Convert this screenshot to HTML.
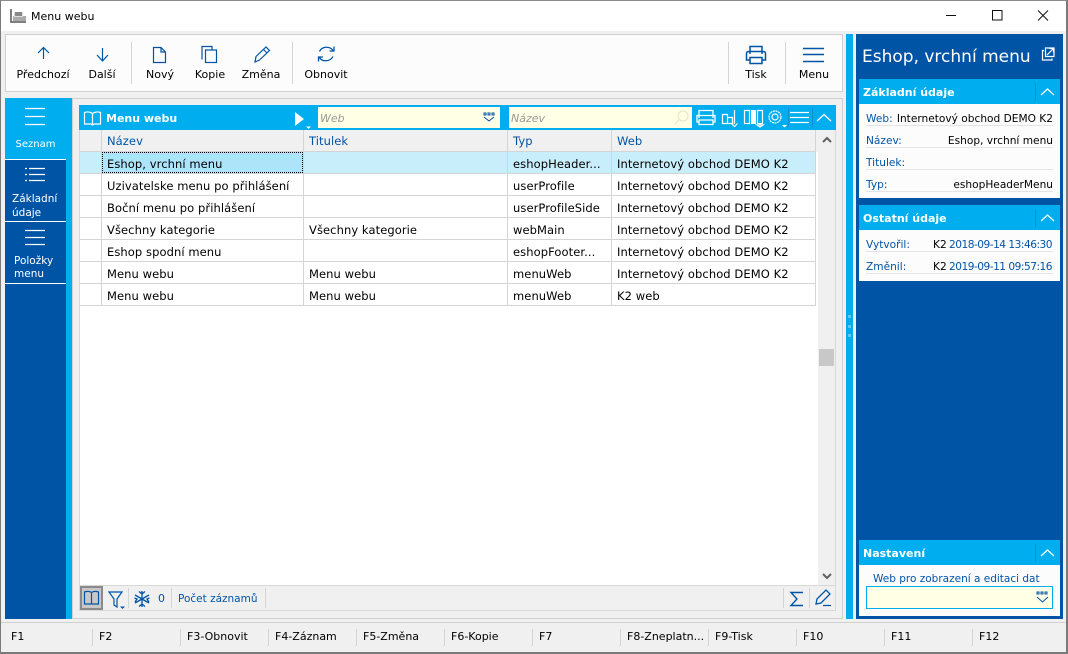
<!DOCTYPE html>
<html><head><meta charset="utf-8"><style>
html,body{margin:0;padding:0}
body{width:1068px;height:654px;position:relative;overflow:hidden;background:#f0f0f0;font:11px/14px "DejaVu Sans","Liberation Sans",sans-serif;color:#000}
div,span,svg{position:absolute;box-sizing:border-box}
.t{white-space:nowrap}
.r{font-size:11.5px;letter-spacing:.08px}
.v{font-size:10.6px}
.b{color:#0054a6}
.c{text-align:center}
.h{background:#00aeef}
.hd{color:#fff;font-weight:bold;font-size:11px;white-space:nowrap}
.l{background:#d4d4d4}
svg{overflow:visible;fill:none}
</style></head><body>
<div style="left:0;top:0;width:1068px;height:654px;border:1px solid #7a7a7a;border-top-color:#8a8a8a;z-index:9;border-right-width:2px;border-bottom-width:2px"></div>
<div style="left:1px;top:1px;width:1066px;height:30px;background:#fff"></div>
<svg style="left:10px;top:8px" width="17" height="15"><path d="M1 1V14H16" stroke="#555" stroke-width="1.5"/><rect x="3" y="8" width="13" height="5" fill="#aaa"/><rect x="4" y="4" width="9" height="5" fill="#ddd"/><path d="M5 5h7M5 7h7" stroke="#333"/></svg>
<div class="t" style="left:31px;top:10px">Menu webu</div>
<svg style="left:946px;top:10px" width="110" height="12"><path d="M0 5.5H10" stroke="#111"/><rect x="46.5" y=".5" width="9.5" height="9.5" stroke="#111"/><path d="M92 .5L102 10.5M102 .5L92 10.5" stroke="#111"/></svg>

<div style="left:5px;top:34px;width:838px;height:58px;background:#fcfcfc;border:1px solid #d0d0d0"></div>
<div class="l" style="left:131px;top:42px;width:1px;height:42px"></div>
<div class="l" style="left:292px;top:42px;width:1px;height:42px"></div>
<div class="l" style="left:728px;top:42px;width:1px;height:42px"></div>
<div class="l" style="left:785px;top:42px;width:1px;height:42px"></div>
<svg style="left:0;top:0" width="860" height="90" stroke="#0054a6" stroke-width="1.2">
<path d="M43.500 59V48M38 53L43.500 47.500 49 53"/>
<path d="M102.500 48V60M97 55L102.500 61 108 55"/>
<path d="M153.500 47.500H161L165.500 52V62.500H153.500ZM161 47.500V52H165.500"/>
<path d="M202 59.500V46.500H212V50" /><rect x="205.500" y="50" width="11" height="12.500"/>
<path d="M255 62L256 56.500 266 47 269.500 50.500 259.500 60ZM263.500 49.500L267 53"/>
<path d="M319.500 51.500C322 46 330 46 333 50.500M334 46.500V51H329.500M333 56.500C330 62 322 62 319.500 57.500M318.500 61.500V57H323" stroke-width="1.300"/>
<path d="M750 54V46.500H762V54M750 60H746.500V53.500Q746.500 51.500 749 51.500H763Q765.500 51.500 765.500 53.500V60H762M750 57.500H762V63.500H750Z" stroke-width="1.500"/>
<path d="M803 48.500H824M803 54.500H824M803 61.500H824" stroke-width="1.500"/>
</svg>
<div class="t c" style="left:3px;top:68px;width:80px">Předchozí</div>
<div class="t c" style="left:72px;top:68px;width:60px">Další</div>
<div class="t c" style="left:130px;top:68px;width:60px">Nový</div>
<div class="t c" style="left:180px;top:68px;width:60px">Kopie</div>
<div class="t c" style="left:231px;top:68px;width:60px">Změna</div>
<div class="t c" style="left:296px;top:68px;width:60px">Obnovit</div>
<div class="t c" style="left:726px;top:68px;width:60px">Tisk</div>
<div class="t c" style="left:784px;top:68px;width:60px">Menu</div>

<div style="left:72px;top:98px;width:771px;height:521px;border:1px solid #d0d0d0;background:#f0f0f0"></div>
<div style="left:5px;top:98px;width:67px;height:521px;background:#00aeef"></div>
<div style="left:5px;top:160px;width:61px;height:459px;background:#0054a6"></div>
<div style="left:5px;top:159px;width:61px;height:1px;background:#fff"></div>
<div style="left:5px;top:221px;width:61px;height:1px;background:#fff"></div>
<div style="left:5px;top:283px;width:61px;height:1px;background:#fff"></div>
<svg style="left:0;top:0" width="70" height="260" stroke="#fff">
<path d="M25 108.500H45M25 116.500H45M25 124.500H45" stroke-width="1.300"/>
<path d="M25 168.500H27M29 168.500H45M25 174.500H27M29 174.500H45M25 180.500H27M29 180.500H45" stroke-width="1.300"/>
<path d="M25 230.500H45M25 237.500H45M25 244.500H45" stroke-width="1.300"/>
</svg>
<div class="t c" style="left:5px;top:138px;width:61px;color:#fff;font-size:10px">Seznam</div>
<div class="t" style="left:12px;top:192px;color:#fff;line-height:14px;font-size:10.500px">Základní<br>údaje</div>
<div class="t" style="left:14px;top:255px;color:#fff;line-height:13px;font-size:10.500px">Položky<br>menu</div>

<div style="left:79px;top:105px;width:757px;height:506px;background:#fff;border:1px solid #d8d8d8;border-top:0"></div>
<div class="h" style="left:79px;top:105px;width:757px;height:25px"></div>
<svg style="left:79px;top:105px" width="757" height="25" stroke="#fff" stroke-width="1.200">
<path d="M5.500 7.500Q10 6 13.500 8.500Q17 6 21.500 7.500V19H15L13.500 20 12 19H5.500ZM13.500 8.500V19"/>
<path d="M216 7V21L225 14Z" fill="#fff" stroke="none"/><path d="M227 21.500H232L229.500 24Z" fill="#fff" stroke="none"/>
<path d="M620 13V5.500H634V13M620 17H618V10.500H636V17H634M620 15H634V19.500H620Z" stroke-width="1.300"/>
<path d="M643.500 9.500h5v9h-5zM648.500 12.500h5v6h-5zM655.500 5v14M652.500 18.500l3 3 3-3" />
<path d="M665.500 5.500h5v13h-5zM678.500 5.500h5v13h-5zM681 19l0 1M678 20h6l-3 2z"/><rect x="672" y="5" width="5" height="14" fill="#fff" stroke="none"/>
<circle cx="696" cy="12" r="6" stroke-dasharray="2 .6"/><circle cx="696" cy="12" r="3"/><path d="M703 20h5l-2.500 2.500z" fill="#fff" stroke="none"/>
<path d="M711 7.500H730M711 12.500H730M711 17.500H730" stroke-width="1.200"/>
<path d="M738 16L745 9.500 752 16" stroke-width="1.200"/>
<path d="M709.500 3V22M733.500 3V22" stroke="#1090d0" stroke-width="1"/>
</svg>
<div class="hd" style="left:106px;top:112px">Menu webu</div>
<div style="left:318px;top:107px;width:182px;height:21px;background:#ffffe6"></div>
<div class="t" style="left:320px;top:112px;color:#999;font-style:italic">Web</div>
<svg style="left:483px;top:112px" width="13" height="10" stroke="#0054a6"><path d="M1 1h2v2h-2zM5 1h2v2h-2zM9 1h2v2h-2zM1 5L6 9 11 5" stroke-width="1"/></svg>
<div style="left:509px;top:107px;width:183px;height:21px;background:#ffffe6"></div>
<div class="t" style="left:511px;top:112px;color:#999;font-style:italic">Název</div>
<svg style="left:674px;top:110px" width="16" height="15" stroke="#e8e8c8" stroke-width="1.200"><circle cx="9" cy="6" r="5"/><path d="M5 10L1 14"/></svg>

<div style="left:80px;top:130px;width:738px;height:22px;background:#f0f0f0"></div>
<div style="left:818px;top:130px;width:17px;height:455px;background:#f0f0f0"></div>
<div style="left:819px;top:349px;width:15px;height:17px;background:#c8c8c8"></div>
<svg style="left:818px;top:130px" width="18" height="455" stroke="#606060" stroke-width="2"><path d="M5 12L9 8 13 12M5 444L9 448 13 444"/></svg>
<div style="left:80px;top:152px;width:736px;height:22px;background:#c9eefb"></div>
<div style="left:102px;top:152px;width:201px;height:21px;background:#ade4fa;border:1px dotted #000"></div>
<div class="l" style="left:80px;top:151px;width:736px;height:1px"></div>
<div class="l" style="left:80px;top:173px;width:736px;height:1px"></div>
<div class="l" style="left:80px;top:195px;width:736px;height:1px"></div>
<div class="l" style="left:80px;top:217px;width:736px;height:1px"></div>
<div class="l" style="left:80px;top:239px;width:736px;height:1px"></div>
<div class="l" style="left:80px;top:261px;width:736px;height:1px"></div>
<div class="l" style="left:80px;top:283px;width:736px;height:1px"></div>
<div class="l" style="left:80px;top:305px;width:736px;height:1px"></div>
<div class="l" style="left:101px;top:130px;width:1px;height:175px"></div>
<div class="l" style="left:303px;top:130px;width:1px;height:175px"></div>
<div class="l" style="left:507px;top:130px;width:1px;height:175px"></div>
<div class="l" style="left:611px;top:130px;width:1px;height:175px"></div>
<div class="l" style="left:815px;top:130px;width:1px;height:175px"></div>
<div class="t b r" style="left:107px;top:134px">Název</div>
<div class="t b r" style="left:309px;top:134px">Titulek</div>
<div class="t b r" style="left:513px;top:134px">Typ</div>
<div class="t b r" style="left:617px;top:134px">Web</div>

<div class="t r" style="left:107px;top:157px">Eshop, vrchní menu</div><div class="t r" style="left:513px;top:157px">eshopHeader...</div><div class="t r" style="left:617px;top:157px">Internetový obchod DEMO K2</div>
<div class="t r" style="left:107px;top:179px">Uzivatelske menu po přihlášení</div><div class="t r" style="left:513px;top:179px">userProfile</div><div class="t r" style="left:617px;top:179px">Internetový obchod DEMO K2</div>
<div class="t r" style="left:107px;top:201px">Boční menu po přihlášení</div><div class="t r" style="left:513px;top:201px">userProfileSide</div><div class="t r" style="left:617px;top:201px">Internetový obchod DEMO K2</div>
<div class="t r" style="left:107px;top:223px">Všechny kategorie</div><div class="t r" style="left:309px;top:223px">Všechny kategorie</div><div class="t r" style="left:513px;top:223px">webMain</div><div class="t r" style="left:617px;top:223px">Internetový obchod DEMO K2</div>
<div class="t r" style="left:107px;top:245px">Eshop spodní menu</div><div class="t r" style="left:513px;top:245px">eshopFooter...</div><div class="t r" style="left:617px;top:245px">Internetový obchod DEMO K2</div>
<div class="t r" style="left:107px;top:267px">Menu webu</div><div class="t r" style="left:309px;top:267px">Menu webu</div><div class="t r" style="left:513px;top:267px">menuWeb</div><div class="t r" style="left:617px;top:267px">Internetový obchod DEMO K2</div>
<div class="t r" style="left:107px;top:289px">Menu webu</div><div class="t r" style="left:309px;top:289px">Menu webu</div><div class="t r" style="left:513px;top:289px">menuWeb</div><div class="t r" style="left:617px;top:289px">K2 web</div>

<div style="left:80px;top:585px;width:755px;height:25px;background:#f0f0f0;border-top:1px solid #d8d8d8"></div>
<div style="left:80px;top:586px;width:23px;height:24px;background:#c8c8c8;border:2px solid #8a8a8a"></div>
<div class="l" style="left:128px;top:588px;width:1px;height:20px"></div>
<div class="l" style="left:171px;top:588px;width:1px;height:20px"></div>
<div class="l" style="left:265px;top:588px;width:1px;height:20px"></div>
<div class="l" style="left:783px;top:588px;width:1px;height:20px"></div>
<div class="l" style="left:809px;top:588px;width:1px;height:20px"></div>
<svg style="left:0;top:0" width="840" height="620" stroke="#0054a6" stroke-width="1.200">
<path d="M84.500 592Q89 590.500 91.500 592.500Q94 590.500 98.500 592V604H84.500ZM91.500 592.500V604"/>
<path d="M109 592H122L117 599V607L114 605V599Z"/><path d="M120 606.500H125L122.500 609Z" fill="#0054a6" stroke="none"/>
<path d="M142 591V607M135 595L149 603M149 595L135 603M139 591.500L142 594 145 591.500M139 606.500L142 604 145 606.500M134.500 598L137 599 135 602M149.500 598L147 599 149 602" stroke-width="1.300"/>
<path d="M803 592.500H791L797 599 791 605.500H803" stroke-width="1.400"/>
<path d="M816 604L817 599 826 590 830 594 821 603ZM823 605.500H831" stroke-width="1.300"/>
</svg>
<div class="t b" style="left:158px;top:592px">0</div>
<div class="t b" style="left:178px;top:592px;font-size:10.500px">Počet záznamů</div>

<div style="left:1px;top:622px;width:1066px;height:1px;background:#d0d0d0"></div>
<div class="l" style="left:92px;top:629px;width:1px;height:17px"></div>
<div class="l" style="left:180px;top:629px;width:1px;height:17px"></div>
<div class="l" style="left:268px;top:629px;width:1px;height:17px"></div>
<div class="l" style="left:356px;top:629px;width:1px;height:17px"></div>
<div class="l" style="left:444px;top:629px;width:1px;height:17px"></div>
<div class="l" style="left:532px;top:629px;width:1px;height:17px"></div>
<div class="l" style="left:620px;top:629px;width:1px;height:17px"></div>
<div class="l" style="left:708px;top:629px;width:1px;height:17px"></div>
<div class="l" style="left:796px;top:629px;width:1px;height:17px"></div>
<div class="l" style="left:884px;top:629px;width:1px;height:17px"></div>
<div class="l" style="left:972px;top:629px;width:1px;height:17px"></div>
<div class="t" style="left:11px;top:630px">F1</div>
<div class="t" style="left:99px;top:630px">F2</div>
<div class="t" style="left:187px;top:630px">F3-Obnovit</div>
<div class="t" style="left:275px;top:630px">F4-Záznam</div>
<div class="t" style="left:363px;top:630px">F5-Změna</div>
<div class="t" style="left:451px;top:630px">F6-Kopie</div>
<div class="t" style="left:539px;top:630px">F7</div>
<div class="t" style="left:627px;top:630px">F8-Zneplatn...</div>
<div class="t" style="left:715px;top:630px">F9-Tisk</div>
<div class="t" style="left:803px;top:630px">F10</div>
<div class="t" style="left:891px;top:630px">F11</div>
<div class="t" style="left:979px;top:630px">F12</div>

<div class="h" style="left:846px;top:34px;width:7px;height:585px"></div>
<div style="left:848px;top:315px;width:3px;height:3px;background:#60c8f5"></div>
<div style="left:848px;top:325px;width:3px;height:3px;background:#60c8f5"></div>
<div style="left:848px;top:334px;width:3px;height:3px;background:#60c8f5"></div>
<div style="left:856px;top:34px;width:207px;height:585px;background:#0054a6"></div>
<div class="t" style="left:862px;top:46px;color:#fff;font-size:17px;line-height:22px">Eshop, vrchní menu</div>
<svg style="left:1041px;top:47px" width="14" height="15" stroke="#fff" stroke-width="1.200"><path d="M3 3.500H1.500V13H11V11.500M4.500 1H13V9.500H4.500ZM6 8L12 2M8.500 1.500H12.500V5.500"/></svg>

<div style="left:859px;top:79px;width:201px;height:119px;background:#fcfcfc"></div>
<div class="h" style="left:859px;top:79px;width:201px;height:25px"></div>
<div class="hd" style="left:863px;top:86px">Základní údaje</div>
<div class="t b v" style="left:866px;top:112px">Web:</div><div class="t v" style="left:1053px;top:112px;transform:translateX(-100%)">Internetový obchod DEMO K2</div>
<div class="t b v" style="left:866px;top:134px">Název:</div><div class="t v" style="left:1053px;top:134px;transform:translateX(-100%)">Eshop, vrchní menu</div>
<div class="t b v" style="left:866px;top:156px">Titulek:</div>
<div class="t b v" style="left:866px;top:178px">Typ:</div><div class="t v" style="left:1053px;top:178px;transform:translateX(-100%)">eshopHeaderMenu</div>
<div style="left:866px;top:125px;width:187px;height:1px;background:#e4e4e4"></div>
<div style="left:866px;top:147px;width:187px;height:1px;background:#e4e4e4"></div>
<div style="left:866px;top:169px;width:187px;height:1px;background:#e4e4e4"></div>
<div style="left:866px;top:191px;width:187px;height:1px;background:#e4e4e4"></div>

<div style="left:859px;top:205px;width:201px;height:76px;background:#fcfcfc"></div>
<div class="h" style="left:859px;top:205px;width:201px;height:25px"></div>
<div class="hd" style="left:863px;top:212px">Ostatní údaje</div>
<div class="t b v" style="left:866px;top:238px">Vytvořil:</div><div class="t v" style="left:933px;top:238px">K2</div><div class="t b v" style="left:1052px;top:238px;transform:translateX(-100%);letter-spacing:-.5px">2018-09-14 13:46:30</div>
<div class="t b v" style="left:866px;top:260px">Změnil:</div><div class="t v" style="left:933px;top:260px">K2</div><div class="t b v" style="left:1052px;top:260px;transform:translateX(-100%);letter-spacing:-.5px">2019-09-11 09:57:16</div>
<div style="left:866px;top:251px;width:187px;height:1px;background:#e4e4e4"></div>
<div style="left:866px;top:273px;width:187px;height:1px;background:#e4e4e4"></div>

<div style="left:859px;top:540px;width:201px;height:76px;background:#fcfcfc"></div>
<div class="h" style="left:859px;top:540px;width:201px;height:25px"></div>
<div class="hd" style="left:863px;top:547px">Nastavení</div>
<div class="t b" style="left:873px;top:572px;font-size:10.500px">Web pro zobrazení a editaci dat</div>
<div style="left:866px;top:586px;width:187px;height:23px;background:#ffffe6;border:1px solid #00aeef"></div>
<svg style="left:1036px;top:591px" width="13" height="12" stroke="#0054a6"><path d="M1 1h2v2h-2zM5 1h2v2h-2zM9 1h2v2h-2zM1 6L6.500 11 12 6"/></svg>

<svg style="left:1035px;top:79px" width="25" height="500" stroke="#fff" stroke-width="1.200">
<path d="M0.500 4V22M0.500 130V148" stroke="#1090d0" stroke-width="1"/>
<path d="M6 16L12.500 10 19 16M6 142L12.500 136 19 142M6 477L12.500 471 19 477"/>
<path d="M0.500 465V483" stroke="#1090d0" stroke-width="1"/>
</svg>
</body></html>
